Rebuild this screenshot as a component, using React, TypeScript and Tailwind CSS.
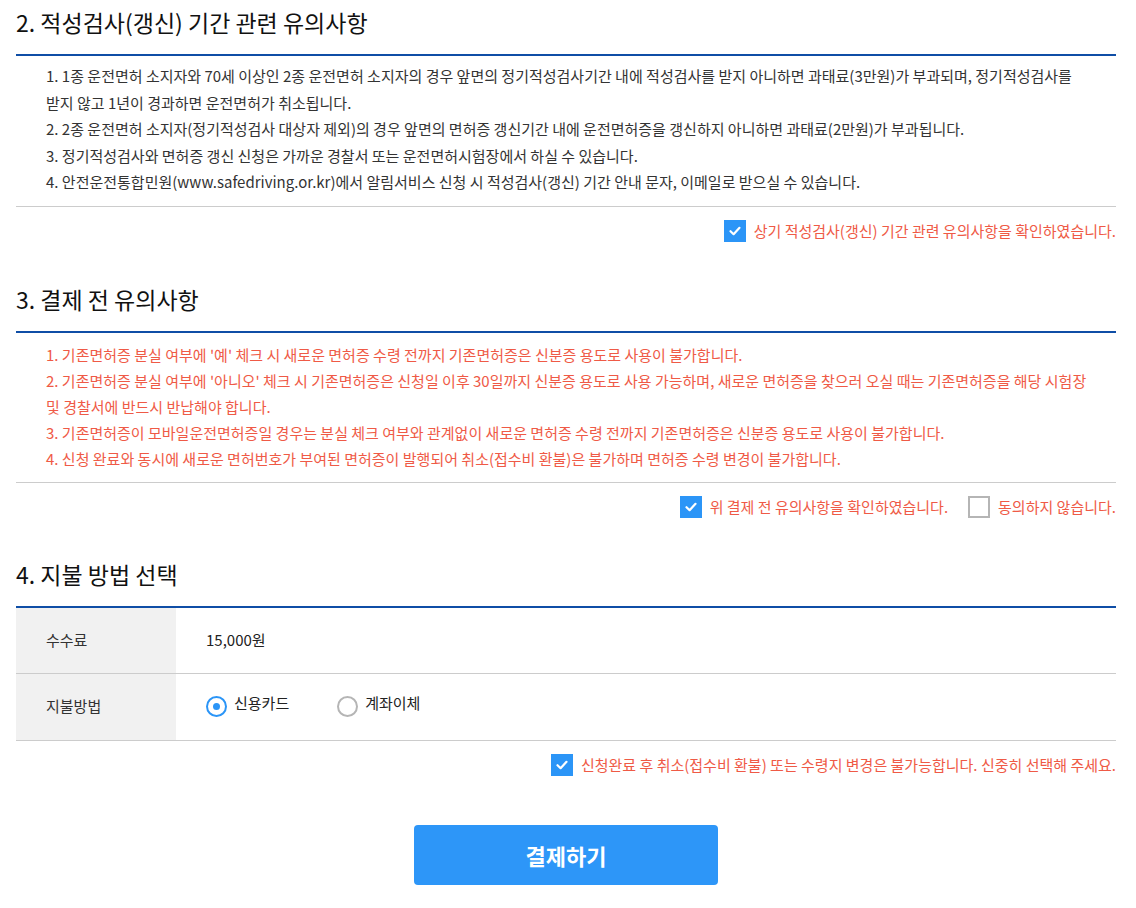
import React from "react";

const font = { fontFamily: '"Noto Sans CJK KR", "Noto Sans", sans-serif' };

function CheckBox({ checked }: { checked: boolean }) {
  if (!checked) {
    return <span className="w-[22px] h-[22px] border-2 border-[#b5b5b5] bg-white shrink-0" />;
  }
  return (
    <span className="w-[22px] h-[22px] bg-[#2b95f7] flex items-center justify-center shrink-0">
      <svg width="14" height="14" viewBox="0 0 14 14" fill="none">
        <path d="M2.5 7.2 L5.6 10.2 L11.5 3.8" stroke="white" strokeWidth="2.2" strokeLinecap="round" strokeLinejoin="round" />
      </svg>
    </span>
  );
}

function Radio({ checked, label }: { checked: boolean; label: string }) {
  return (
    <label className="flex items-center gap-[7px]">
      <span
        className={`w-[21px] h-[21px] rounded-full border-2 flex items-center justify-center ${
          checked ? "border-[#2b95f7]" : "border-[#b5b5b5]"
        }`}
      >
        {checked && <span className="w-[7px] h-[7px] rounded-full bg-[#2b95f7]" />}
      </span>
      <span className="-mt-[6px]">{label}</span>
    </label>
  );
}

function Heading({ children }: { children: React.ReactNode }) {
  return (
    <h2 className="text-[23px] leading-[32px] text-[#111] pt-[6px] pb-[16px] border-b-2 border-[#0f4ea6]">
      {children}
    </h2>
  );
}

export default function App() {
  return (
    <div className="bg-white w-[1136px] min-h-[908px] pl-4 pr-5 text-[#333]" style={font}>
      {/* section 2 */}
      <Heading>2. 적성검사(갱신) 기간 관련 유의사항</Heading>
      <ul className="pl-[30px] pt-[7px] pb-[10px] text-[15px] leading-[26.5px] border-b border-[#cccccc]">
        <li>
          1. 1종 운전면허 소지자와 70세 이상인 2종 운전면허 소지자의 경우 앞면의 정기적성검사기간 내에 적성검사를 받지 아니하면 과태료(3만원)가 부과되며, 정기적성검사를
          <br />
          받지 않고 1년이 경과하면 운전면허가 취소됩니다.
        </li>
        <li>2. 2종 운전면허 소지자(정기적성검사 대상자 제외)의 경우 앞면의 면허증 갱신기간 내에 운전면허증을 갱신하지 아니하면 과태료(2만원)가 부과됩니다.</li>
        <li>3. 정기적성검사와 면허증 갱신 신청은 가까운 경찰서 또는 운전면허시험장에서 하실 수 있습니다.</li>
        <li>4. 안전운전통합민원(www.safedriving.or.kr)에서 알림서비스 신청 시 적성검사(갱신) 기간 안내 문자, 이메일로 받으실 수 있습니다.</li>
      </ul>
      <div className="flex justify-end items-center pt-[13px] mb-[35px] text-[15px] text-[#ef5a46]">
        <label className="flex items-center gap-[8px]">
          <CheckBox checked />
          <span>상기 적성검사(갱신) 기간 관련 유의사항을 확인하였습니다.</span>
        </label>
      </div>

      {/* section 3 */}
      <Heading>3. 결제 전 유의사항</Heading>
      <ul className="pl-[30px] pt-[9px] pb-[10px] text-[15px] leading-[26px] text-[#ef5a46] border-b border-[#cccccc]">
        <li>1. 기존면허증 분실 여부에 '예' 체크 시 새로운 면허증 수령 전까지 기존면허증은 신분증 용도로 사용이 불가합니다.</li>
        <li>
          2. 기존면허증 분실 여부에 '아니오' 체크 시 기존면허증은 신청일 이후 30일까지 신분증 용도로 사용 가능하며, 새로운 면허증을 찾으러 오실 때는 기존면허증을 해당 시험장
          <br />
          및 경찰서에 반드시 반납해야 합니다.
        </li>
        <li>3. 기존면허증이 모바일운전면허증일 경우는 분실 체크 여부와 관계없이 새로운 면허증 수령 전까지 기존면허증은 신분증 용도로 사용이 불가합니다.</li>
        <li>4. 신청 완료와 동시에 새로운 면허번호가 부여된 면허증이 발행되어 취소(접수비 환불)은 불가하며 면허증 수령 변경이 불가합니다.</li>
      </ul>
      <div className="flex justify-end items-center gap-[20px] pt-[13px] mb-[33px] text-[15px] text-[#ef5a46]">
        <label className="flex items-center gap-[8px]">
          <CheckBox checked />
          <span>위 결제 전 유의사항을 확인하였습니다.</span>
        </label>
        <label className="flex items-center gap-[8px]">
          <CheckBox checked={false} />
          <span>동의하지 않습니다.</span>
        </label>
      </div>

      {/* section 4 */}
      <Heading>4. 지불 방법 선택</Heading>
      <div className="text-[15px]">
        <div className="flex h-[66px] border-b border-[#cccccc]">
          <div className="w-[160px] bg-[#f1f1f1] pl-[30px] flex items-center">수수료</div>
          <div className="pl-[30px] flex items-center text-[#222]">15,000원</div>
        </div>
        <div className="flex h-[67px] border-b border-[#cccccc]">
          <div className="w-[160px] bg-[#f1f1f1] pl-[30px] flex items-center">지불방법</div>
          <div className="pl-[30px] flex items-center gap-[48px] text-[#222]">
            <Radio checked label="신용카드" />
            <Radio checked={false} label="계좌이체" />
          </div>
        </div>
      </div>
      <div className="flex justify-end items-center pt-[13px] text-[15px] text-[#ef5a46]">
        <label className="flex items-center gap-[8px]">
          <CheckBox checked />
          <span>신청완료 후 취소(접수비 환불) 또는 수령지 변경은 불가능합니다. 신중히 선택해 주세요.</span>
        </label>
      </div>
      <div className="flex justify-center pt-[49px] pb-[22px]">
        <button className="w-[304px] h-[60px] rounded-[4px] bg-[#2d96f8] text-white text-[22px] font-bold">
          결제하기
        </button>
      </div>
    </div>
  );
}
